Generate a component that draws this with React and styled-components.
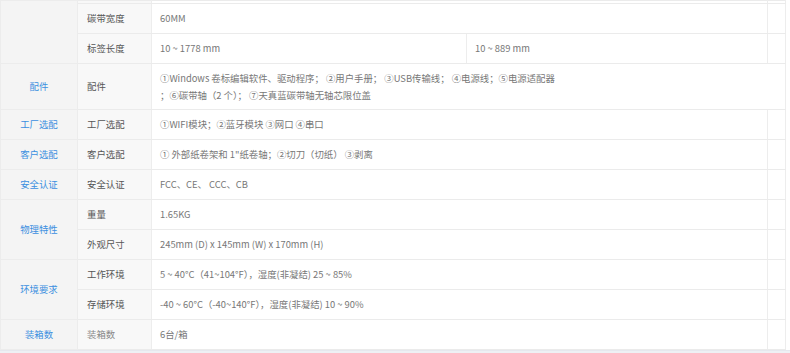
import React from "react";
import styled, { createGlobalStyle } from "styled-components";

const GlobalStyle = createGlobalStyle`
  html, body {
    margin: 0;
    padding: 0;
    background: #ffffff;
    font-family: "Noto Sans CJK SC", "Noto Sans", sans-serif;
  }
`;

const Page = styled.div`
  width: 790px;
  height: 353px;
  overflow: hidden;
  display: flex;
  flex-direction: column;
`;

const SpecTable = styled.table`
  width: 786px;
  border-collapse: collapse;
  table-layout: fixed;
  border-left: 1px solid #ececec;
  border-right: 1px solid #e6e6e6;
`;

const Row = styled.tr`
  height: ${(p) => p.$h || 30}px;
`;

const Cell = styled.td`
  padding: 0 8px;
  border-top: 1px solid #ebebeb;
  border-bottom: 1px solid #ebebeb;
  border-right: 1px solid #ededed;
  font-size: 9.4px;
  line-height: 17px;
  color: #777;
  vertical-align: middle;
  background: #fff;
  white-space: nowrap;
`;

const GroupCell = styled(Cell)`
  background: #f4f4f4;
  color: #3b8fe0;
  text-align: center;
  border-color: #ececec;
`;

const NameCell = styled(Cell)`
  background: #f8f8f8;
  color: ${(p) => (p.$muted ? "#888" : "#555")};
  padding-left: 9px;
`;

const ValueCell = styled(Cell)`
  padding-left: 8px;
`;

const Filler = styled(Cell)`
  padding: 0;
`;

const Footer = styled.div`
  flex: 1;
  background: #eef0f4;
  border-top: 1px solid #e6e8ee;
`;

const rows = [
  { group: "配件", name: "配件", lines: ["①Windows 卷标编辑软件、驱动程序； ②用户手册； ③USB传输线； ④电源线；⑤电源适配器", "；⑥碳带轴（2 个）； ⑦天真蓝碳带轴无轴芯限位盖"], full: true },
  { group: "工厂选配", name: "工厂选配", value: "①WIFI模块；②蓝牙模块 ③网口 ④串口" },
  { group: "客户选配", name: "客户选配", value: "① 外部纸卷架和 1\"纸卷轴；②切刀（切纸） ③剥离" },
  { group: "安全认证", name: "安全认证", value: "FCC、CE、 CCC、CB" },
];

export default function App() {
  return (
    <Page>
      <GlobalStyle />
      <SpecTable>
        <colgroup>
          <col style={{ width: 77 }} />
          <col style={{ width: 74 }} />
          <col style={{ width: 315 }} />
          <col style={{ width: 301 }} />
          <col style={{ width: 18 }} />
        </colgroup>
        <tbody>
          <Row $h={3}>
            <GroupCell rowSpan={3} />
            <NameCell />
            <ValueCell colSpan={2} />
            <Filler />
          </Row>
          <Row>
            <NameCell>碳带宽度</NameCell>
            <ValueCell colSpan={2}>60MM</ValueCell>
            <Filler />
          </Row>
          <Row>
            <NameCell>标签长度</NameCell>
            <ValueCell>10 ~ 1778 mm</ValueCell>
            <ValueCell>10 ~ 889 mm</ValueCell>
            <Filler />
          </Row>
          {rows.map((r) =>
            r.full ? (
              <Row key={r.name} $h={46}>
                <GroupCell>{r.group}</GroupCell>
                <NameCell>{r.name}</NameCell>
                <ValueCell colSpan={3}>
                  {r.lines.map((l) => (
                    <div key={l}>{l}</div>
                  ))}
                </ValueCell>
              </Row>
            ) : (
              <Row key={r.name}>
                <GroupCell>{r.group}</GroupCell>
                <NameCell>{r.name}</NameCell>
                <ValueCell colSpan={2}>{r.value}</ValueCell>
                <Filler />
              </Row>
            )
          )}
          <Row>
            <GroupCell rowSpan={2}>物理特性</GroupCell>
            <NameCell>重量</NameCell>
            <ValueCell colSpan={2}>1.65KG</ValueCell>
            <Filler />
          </Row>
          <Row>
            <NameCell>外观尺寸</NameCell>
            <ValueCell colSpan={2}>245mm (D) x 145mm (W) x 170mm (H)</ValueCell>
            <Filler />
          </Row>
          <Row>
            <GroupCell rowSpan={2}>环境要求</GroupCell>
            <NameCell>工作环境</NameCell>
            <ValueCell colSpan={2}>5 ~ 40°C（41~104°F），湿度(非凝结) 25 ~ 85%</ValueCell>
            <Filler />
          </Row>
          <Row>
            <NameCell>存储环境</NameCell>
            <ValueCell colSpan={2}>-40 ~ 60°C（-40~140°F），湿度(非凝结) 10 ~ 90%</ValueCell>
            <Filler />
          </Row>
          <Row>
            <GroupCell>装箱数</GroupCell>
            <NameCell $muted>装箱数</NameCell>
            <ValueCell colSpan={2}>6台/箱</ValueCell>
            <Filler />
          </Row>
        </tbody>
      </SpecTable>
      <Footer />
    </Page>
  );
}
